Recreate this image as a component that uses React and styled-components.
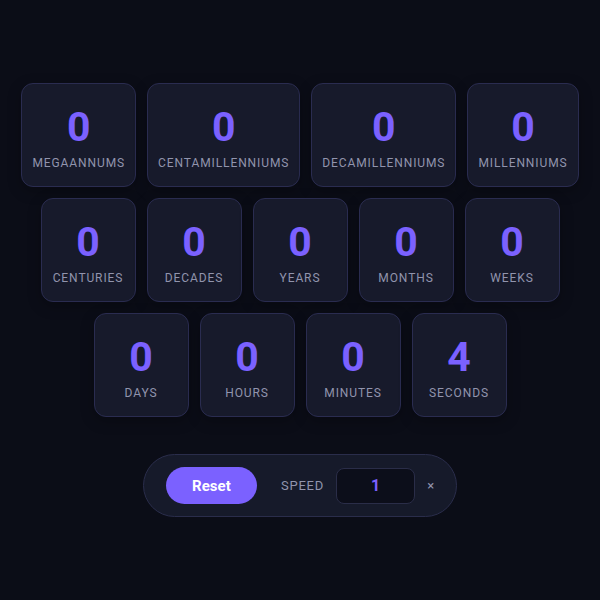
import React, { useState } from 'react';
import styled, { createGlobalStyle } from 'styled-components';

const GlobalStyle = createGlobalStyle`
  * { box-sizing: border-box; }
  body {
    margin: 0;
    background: #0b0d17;
    font-family: 'Roboto', 'Inter', sans-serif;
  }
`;

const Page = styled.div`
  min-height: 100vh;
  display: flex;
  flex-direction: column;
  align-items: center;
  justify-content: center;
  gap: 37px;
  padding: 0 14px;
`;

const Grid = styled.div`
  display: flex;
  flex-wrap: wrap;
  justify-content: center;
  gap: 11px;
  width: 100%;
`;

const Card = styled.div`
  min-width: 95px;
  height: 104px;
  padding: 19px 10px 17px;
  display: flex;
  flex-direction: column;
  align-items: center;
  gap: 4px;
  background: #171a2b;
  border: 1px solid #2a2c50;
  border-radius: 12px;
  box-shadow: 0 4px 14px rgba(0, 0, 0, 0.25);
`;

const Value = styled.div`
  font-size: 41px;
  line-height: 48px;
  font-weight: 700;
  color: #7b61ff;
`;

const Label = styled.div`
  font-size: 12px;
  line-height: 16px;
  letter-spacing: 0.9px;
  color: #9194ad;
  text-transform: uppercase;
  white-space: nowrap;
`;

const Controls = styled.div`
  display: flex;
  align-items: center;
  height: 63px;
  padding: 0 22px 0 22px;
  background: #161a2a;
  border: 1px solid #2a2d4b;
  border-radius: 32px;
`;

const ResetButton = styled.button`
  width: 91px;
  height: 37px;
  border: none;
  border-radius: 19px;
  background: #7b61ff;
  color: #ffffff;
  font-family: inherit;
  font-size: 15px;
  font-weight: 700;
  cursor: pointer;
  margin-right: 24px;
`;

const SpeedLabel = styled.span`
  font-size: 13px;
  letter-spacing: 0.8px;
  color: #9194ad;
  margin-right: 12px;
`;

const SpeedInput = styled.input`
  width: 79px;
  height: 36px;
  background: #0c0e1a;
  border: 1px solid #2a2d48;
  border-radius: 8px;
  color: #7b61ff;
  font-family: inherit;
  font-size: 16px;
  font-weight: 700;
  text-align: center;
  outline: none;
  margin-right: 12px;
`;

const Times = styled.span`
  font-size: 13px;
  color: #9194ad;
`;

const units = [
  ['Megaannums', 0],
  ['Centamillenniums', 0],
  ['Decamillenniums', 0],
  ['Millenniums', 0],
  ['Centuries', 0],
  ['Decades', 0],
  ['Years', 0],
  ['Months', 0],
  ['Weeks', 0],
  ['Days', 0],
  ['Hours', 0],
  ['Minutes', 0],
  ['Seconds', 4],
];

export default function App() {
  const [speed, setSpeed] = useState('1');

  return (
    <>
      <GlobalStyle />
      <Page>
        <Grid>
          {units.map(([name, value]) => (
            <Card key={name}>
              <Value>{value}</Value>
              <Label>{name}</Label>
            </Card>
          ))}
        </Grid>
        <Controls>
          <ResetButton>Reset</ResetButton>
          <SpeedLabel>SPEED</SpeedLabel>
          <SpeedInput value={speed} onChange={e => setSpeed(e.target.value)} />
          <Times>×</Times>
        </Controls>
      </Page>
    </>
  );
}
